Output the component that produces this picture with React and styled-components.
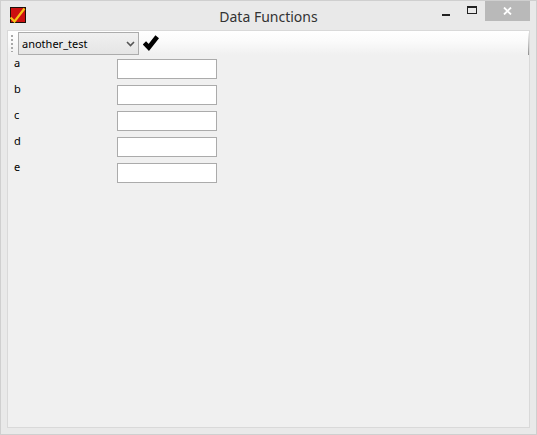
import React from "react";
import styled, { createGlobalStyle } from "styled-components";

const Global = createGlobalStyle`
  html, body { margin: 0; padding: 0; width: 537px; height: 435px; overflow: hidden; background: #e9e9e9; }
  * { box-sizing: border-box; }
`;
const Win = styled.div`
  width: 537px; height: 435px; display: flex; flex-direction: column;
  background: #e9e9e9; border: 1px solid #cfcfcf; padding: 0 6px 6px 6px;
  font-family: "Noto Sans", sans-serif;
`;
const TitleBar = styled.div`
  height: 29px; flex: none; display: grid; grid-template-columns: 1fr auto 1fr; align-items: start;
`;
const AppIcon = styled.svg`width: 16px; height: 16px; margin: 6px 0 0 3px; display: block;`;
const Title = styled.div`font-size: 14px; line-height: 19px; color: #333; padding-top: 6px;`;
const Controls = styled.div`display: flex; justify-content: flex-end; align-items: flex-start;`;
const CtlBtn = styled.div`
  width: ${p => p.$w}px; height: 20px; display: flex; align-items: center; justify-content: center;
  background: ${p => p.$bg || "transparent"};
`;
const Client = styled.div`
  flex: 1; display: flex; flex-direction: column; background: #f0f0f0;
  border: 1px solid #d9d9d9;
`;
const Toolbar = styled.div`
  height: 24px; flex: none; display: flex; align-items: flex-start;
  background: linear-gradient(#ffffff, #fbfbfb 40%, #f0f0f0);
  position: relative;
`;
const Grip = styled.div`
  width: 2px; height: 17px; margin: 4px 5px 0 3px; flex: none;
  background: repeating-linear-gradient(#a8a8a8 0 2px, transparent 2px 4px);
`;
const Select = styled.div`
  width: 121px; height: 23px; margin-top: 1px; flex: none; display: flex; align-items: center; justify-content: space-between;
  border: 1px solid #acacac; background: linear-gradient(#f0f0f0, #e5e5e5);
  padding: 0 3px 0 3px; font-size: 11px; color: #000;
`;
const Check = styled.svg`width: 16px; height: 16px; margin: 4px 0 0 4px; display: block;`;
const EndShade = styled.div`
  position: absolute; right: 0; top: 2px; width: 1px; height: 22px;
  background: linear-gradient(#f4f4f4, #8f8f8f);
`;
const Form = styled.div`
  padding: 4px 0 0 6px; display: flex; flex-direction: column; gap: 6px;
`;
const Row = styled.div`display: flex; align-items: flex-start; height: 20px;`;
const Label = styled.div`width: 103px; font-size: 11px; line-height: 15px; color: #000; margin-top: -4px;`;
const Input = styled.div`width: 100px; height: 20px; background: #fff; border: 1px solid #ababab;`;

export default function App() {
  return (
    <Win>
      <Global />
      <TitleBar>
        <AppIcon viewBox="0 0 16 16">
          <rect x="0" y="0" width="16" height="16" fill="#1c1008" />
          <rect x="1" y="1" width="14" height="14" fill="#cc1010" />
          <path d="M0.5 10.5 L4.5 14.5 L14.5 1.5" fill="none" stroke="#f5c518" strokeWidth="2.2" />
        </AppIcon>
        <Title>Data Functions</Title>
        <Controls>
          <CtlBtn $w={27}>
            <svg width="8" height="2" viewBox="0 0 8 2" style={{ marginTop: 8 }}><rect width="8" height="2" fill="#222" /></svg>
          </CtlBtn>
          <CtlBtn $w={26}>
            <svg width="10" height="8" viewBox="0 0 10 8" style={{ marginTop: -3 }}><rect x="0.5" y="0.5" width="9" height="7" fill="none" stroke="#222" /><rect x="0" y="0" width="10" height="2" fill="#222" /></svg>
          </CtlBtn>
          <CtlBtn $w={45} $bg="#b9b9b9">
            <svg width="9" height="8" viewBox="0 0 9 8"><path d="M1 0.5 L8 7.5 M8 0.5 L1 7.5" stroke="#fff" strokeWidth="1.8" /></svg>
          </CtlBtn>
        </Controls>
      </TitleBar>
      <Client>
        <Toolbar>
          <Grip />
          <Select>
            another_test
            <svg width="9" height="6" viewBox="0 0 9 6"><path d="M1 1 L4.5 4.5 L8 1" fill="none" stroke="#555" strokeWidth="1.6" /></svg>
          </Select>
          <Check viewBox="0 0 16 16">
            <path d="M1.4 7.8 L5.8 12.4 L14.2 1.8" fill="none" stroke="#000" strokeWidth="4.6" />
          </Check>
          <EndShade />
        </Toolbar>
        <Form>
          {["a", "b", "c", "d", "e"].map(l => (
            <Row key={l}><Label>{l}</Label><Input /></Row>
          ))}
        </Form>
      </Client>
    </Win>
  );
}
